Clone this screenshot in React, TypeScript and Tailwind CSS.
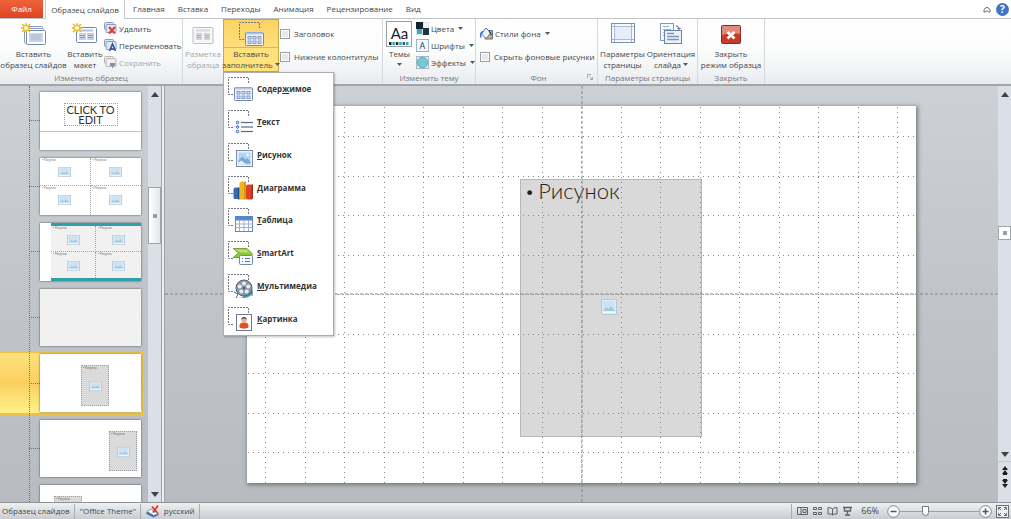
import type { ReactNode } from 'react';

type IconProps = { className?: string };

const SANS = "font-['Open_Sans','Noto_Sans',sans-serif]";
const GEOMETRIC = "font-['Lato','Open_Sans',sans-serif]";

const TABS = ['Главная', 'Вставка', 'Переходы', 'Анимация', 'Рецензирование', 'Вид'];

/* ---------- Icons ---------- */

function Spark() {
  return (
    <g stroke="#e3b62a" strokeWidth="1.300">
      <circle cx="5" cy="5" r="3.500" fill="#f7dc55" stroke="none" />
      <path d="M5 0v10M0 5h10M1 1l8 8M9 1L1 9" />
      <circle cx="5" cy="5" r="2" fill="#fffbd0" stroke="none" />
    </g>
  );
}

function InsertMasterIcon() {
  return (
    <svg width="26" height="24" viewBox="0 0 26 24" fill="none">
      <rect x="4.500" y="3.500" width="17" height="13" rx="1" fill="#f4f7fb" stroke="#8b9dbb" />
      <rect x="3.500" y="5.500" width="19" height="15" rx="1" fill="#fff" stroke="#8b9dbb" />
      <rect x="5.500" y="7.500" width="19" height="14" rx="1" fill="#fff" stroke="#7287ab" />
      <rect x="8" y="10" width="14" height="9" fill="#c9d4e8" />
      <path d="M10 12h10M10 14h10M10 16h10" stroke="#a9b8d2" />
      <Spark />
    </svg>
  );
}

function InsertLayoutIcon() {
  return (
    <svg width="26" height="24" viewBox="0 0 26 24" fill="none">
      <rect x="4.500" y="4.500" width="20" height="15" rx="1" fill="#fff" stroke="#7287ab" />
      <path d="M8 7.500h13" stroke="#b4c2d9" strokeWidth="2" />
      <rect x="7" y="10" width="7" height="7" fill="#c3cfe4" />
      <rect x="15" y="10" width="7" height="7" fill="#c3cfe4" />
      <path d="M8 12.500h5M8 14.500h5M16 12.500h5M16 14.500h5" stroke="#8fa1c0" />
      <Spark />
    </svg>
  );
}

function LayoutIcon() {
  return (
    <svg width="22" height="24" viewBox="0 0 22 24" fill="none">
      <rect x="1" y="4.500" width="20" height="16" rx="1" fill="#f8f6f8" stroke="#c2bcc4" />
      <path d="M4 7.500h14" stroke="#dcd7de" strokeWidth="2" />
      <rect x="4" y="10" width="6" height="7" fill="#d6d1d9" />
      <rect x="12" y="10" width="6" height="7" fill="#d6d1d9" />
      <path d="M5 12.500h4M5 14.500h4M13 12.500h4M13 14.500h4" stroke="#b8b1bc" />
    </svg>
  );
}

function SmallSlides({ muted }: { muted?: boolean }) {
  const stroke = muted ? '#b9b6bc' : '#8b9dbb';
  const fill = muted ? '#eeedf0' : '#dfe7f3';
  return (
    <>
      <rect x="0.500" y="0.500" width="9" height="7" rx="1" fill={fill} stroke={stroke} />
      <rect x="2" y="2.500" width="10" height="8" rx="1" fill={fill} stroke={stroke} />
    </>
  );
}

function DeleteIcon() {
  return (
    <svg width="13" height="13" viewBox="0 0 13 13" fill="none">
      <SmallSlides />
      <path d="M5 5l6 6.500M11 5l-6 6.500" stroke="#e23a2e" strokeWidth="2" />
    </svg>
  );
}

function RenameIcon() {
  return (
    <svg width="13" height="13" viewBox="0 0 13 13" fill="none">
      <SmallSlides />
      <path d="M5.500 12L8.500 5l3 7M6.500 10h4" stroke="#2c50a0" strokeWidth="1.5" />
    </svg>
  );
}

function PreserveIcon() {
  return (
    <svg width="13" height="13" viewBox="0 0 13 13" fill="none">
      <SmallSlides muted />
      <path d="M6 7h5v3H9v2H8v-2H6z" fill="#8f8d92" />
    </svg>
  );
}

/** Dashed square that every placeholder icon is drawn on */
function Placeholder({ children }: { children: ReactNode }) {
  return (
    <svg width="26" height="26" viewBox="0 0 26 26" fill="none">
      <path
        d="M6 18.500H1.500V1.500h20V7"
        stroke="#74777d"
        strokeDasharray="2 1"
      />
      {children}
    </svg>
  );
}

function ContentArt() {
  return (
    <>
      <rect x="7.500" y="11.500" width="18" height="13" rx="1" fill="#f2f6fc" stroke="#6f88b0" />
      <path d="M8 12.500h17" stroke="#b5c8e4" strokeWidth="2" />
      {[10, 15, 20].map((x) => (
        <g key={x} fill="#e1eaf6" stroke="#6b85b5" strokeWidth="0.8">
          <rect x={x} y="15.500" width="3" height="2.500" />
          <rect x={x} y="20" width="3" height="2.500" />
        </g>
      ))}
    </>
  );
}

function TextArt() {
  return (
    <>
      {[13.5, 18, 22.5].map((y) => (
        <g key={y}>
          <circle cx="10.500" cy={y} r="1.300" fill="#d3e4fa" stroke="#3568b8" />
          <path d={`M14 ${y}h12`} stroke="#55688a" strokeWidth="1.2" />
        </g>
      ))}
    </>
  );
}

function PictureArt() {
  return (
    <>
      <rect x="9.500" y="8.500" width="16" height="16" fill="#eaf1fa" stroke="#7d8da8" />
      <rect x="11.500" y="10.500" width="12" height="12" fill="#b4d5f2" />
      <path d="M11.500 21.500v-3l4-4 3 3 2-1.500 3 4v1.500z" fill="#7ea6d0" />
      <path d="M11.500 22.500v-2l3-2 4 3.500v.5z" fill="#e9f3fc" />
      <circle cx="20.500" cy="13" r="1.200" fill="#fff" />
    </>
  );
}

function ChartArt() {
  return (
    <>
      <path d="M6.500 14l1.500-1.500h4.500V24h-5l-1-1z" fill="#2f6cb8" />
      <path d="M11 13l1.500-.5v12H11z" fill="#1d4a88" />
      <path d="M12.500 8l1.500-1.500h4.500V24.500h-5l-1-1z" fill="#f0b51d" />
      <path d="M17.500 7.500l1.200-1v18h-1.200z" fill="#b98010" />
      <path d="M19 11l1.500-1.500H26V23l-1 1.500h-5l-1-1z" fill="#db4526" />
      <path d="M24.500 10.500l1.500-1V23l-1.500 1.500z" fill="#a52c16" />
    </>
  );
}

function TableArt() {
  return (
    <>
      <rect x="8.500" y="9.500" width="17" height="15" fill="#fff" stroke="#6785b8" />
      <rect x="8.500" y="9.500" width="17" height="4" fill="#5387d8" />
      <path d="M8.500 17h17M8.500 20.500h17M12.500 13v11M17 13v11M21.500 13v11" stroke="#9db2d3" />
    </>
  );
}

function SmartArt() {
  return (
    <>
      <path d="M6 8.500h14l6 6-3 3H6l5.500-4.500z" fill="#8cc63c" stroke="#5f9722" strokeWidth="0.8" />
      <path d="M7.500 9.500h12l3 3h-9z" fill="#b9df73" />
      <rect x="12.500" y="15.500" width="13" height="9" rx="1" fill="#f4f7fb" stroke="#7289ae" />
      <path d="M15 18.500h1M15 21.500h1M18 18.500h5M18 21.500h5" stroke="#5b76a3" />
    </>
  );
}

function MediaArt() {
  return (
    <>
      <path d="M10 24c4 1.500 6-.5 8-2s5-2 7-6l1 3c-2 4-4 5-8 6z" fill="#4d93bf" />
      <circle cx="17" cy="15" r="8" fill="#8d98a6" stroke="#56616f" />
      <g fill="#e8eef4">
        <circle cx="17" cy="10.500" r="2" />
        <circle cx="12.700" cy="13.500" r="2" />
        <circle cx="14.300" cy="18.600" r="2" />
        <circle cx="19.700" cy="18.600" r="2" />
        <circle cx="21.300" cy="13.500" r="2" />
      </g>
      <circle cx="17" cy="15" r="1.200" fill="#4c5663" />
      <path d="M7 19l4 2-2 4M21 22l4-3v4" stroke="#3f6f93" />
    </>
  );
}

function ClipArt() {
  return (
    <>
      <rect x="9.500" y="8.500" width="15" height="16" fill="#fff" stroke="#6c7b96" />
      <path d="M12.500 21.500c-.5-4 1.500-5 4.500-5s5 1 4.500 5c-2 1.500-7 1.500-9 0z" fill="#e05227" />
      <circle cx="17" cy="14" r="2.600" fill="#e7b48c" />
      <path d="M14.200 14c-.4-4 6-4 5.600 0-1-2-4.600-2-5.600 0z" fill="#4f3a30" />
    </>
  );
}

function ThemesIcon() {
  return (
    <span className="flex h-[26px] w-[26px] flex-col items-center justify-center border border-[#9aa0a8] bg-white">
      <span className={`text-[15px] leading-[18px] text-[#222] ${GEOMETRIC}`}>Aa</span>
      <svg width="20" height="3" viewBox="0 0 20 3">
        {['#182a30', '#2fa9b5', '#182a30', '#2fa9b5', '#40555c', '#2fa9b5'].map((fill, i) => (
          <rect key={i} x={i * 3.4} width="2.500" height="3" fill={fill} />
        ))}
      </svg>
    </span>
  );
}

function ColorsIcon() {
  return (
    <svg width="13" height="13" viewBox="0 0 13 13">
      <rect width="13" height="13" fill="#dfe4ea" />
      <rect width="7" height="7" fill="#14222e" />
      <rect x="7" y="6" width="6" height="7" fill="#20333f" />
      <rect x="1" y="7" width="5" height="5" fill="#2fb0b4" />
      <rect x="8" y="1" width="4" height="5" fill="#edf2f5" />
    </svg>
  );
}

function FontsIcon() {
  return (
    <span className="flex h-[13px] w-[13px] items-center justify-center border border-[#9db0ca] bg-[#f3f7fb] text-[9px] leading-[11px] text-[#283e66]">
      A
    </span>
  );
}

function EffectsIcon() {
  return (
    <svg width="13" height="13" viewBox="0 0 13 13">
      <rect x="0.500" y="0.500" width="12" height="12" fill="#e6eef3" stroke="#abb7c4" />
      <circle cx="6.500" cy="6.500" r="5.300" fill="#74cad0" stroke="#55b2ba" />
    </svg>
  );
}

function FillIcon() {
  return (
    <svg width="13" height="13" viewBox="0 0 13 13" fill="none">
      <path d="M6 3.500h6.500v8.500H5z" fill="#cfb063" stroke="#5d7196" />
      <path d="M6 1l5 5-5 5.500L1.500 7z" fill="#eef3fa" stroke="#5d7196" />
      <path d="M3 4.500C0 6 0 8 1 10.500" stroke="#3474c4" strokeWidth="1.5" />
      <path d="M9 4l2.500 4" stroke="#2b3c5e" strokeWidth="1.3" />
    </svg>
  );
}

function PageSetupIcon() {
  return (
    <svg width="26" height="24" viewBox="0 0 26 24" fill="none">
      <rect x="1.500" y="0.500" width="23" height="19" fill="#f7fafd" stroke="#7d90b0" />
      <rect x="5" y="4" width="16" height="12" fill="#e6eef7" />
      <path d="M4.500 1v18M21.500 1v18M2 3.500h22M2 16.500h22" stroke="#a9bbd4" />
    </svg>
  );
}

function OrientationIcon() {
  return (
    <svg width="24" height="24" viewBox="0 0 24 24" fill="none">
      <rect x="1.500" y="0.500" width="13" height="17" fill="#f7fafd" stroke="#8799b6" />
      <path d="M4 3.500h6M4 6.500h8M4 9.500h8M4 12.500h8" stroke="#9fb2cf" />
      <rect x="5.500" y="7.500" width="17" height="13" fill="#eaf1f9" stroke="#6c83a8" />
      <path d="M8 10.500h7M8 13.500h12M8 16.500h12" stroke="#7f97bb" strokeWidth="1.5" />
      <path d="M17 3c2 0 3 1 3 3m-1.500-1l1.500 1.500L21.500 5" stroke="#3c4d6b" />
    </svg>
  );
}

function CloseMasterIcon() {
  return (
    <svg width="20" height="24" viewBox="0 0 20 24" fill="none">
      <rect x="0.500" y="2.500" width="19" height="18" rx="1" fill="#c93a2a" stroke="#8d2b20" />
      <path d="M1 3h18v8c-6-1-12-1-18 1z" fill="#e08a7e" />
      <path d="M6.500 9l7 6.500M13.500 9l-7 6.500" stroke="#fff" strokeWidth="2.600" />
    </svg>
  );
}

function PictureGlyph({ className }: IconProps) {
  return (
    <svg className={className} viewBox="0 0 16 16" preserveAspectRatio="none" fill="none">
      <rect x="0.500" y="0.500" width="15" height="15" fill="#e1edf6" stroke="#b3c9d9" />
      <rect x="2" y="2" width="12" height="10" fill="#cde3f1" />
      <path d="M2 12l3.500-4 2 2L10 7l4 5z" fill="#a3c8e2" />
      <path d="M2 12.500h12V14H2z" fill="#f5f9fc" />
    </svg>
  );
}

function Triangle({ down, className = '' }: { down?: boolean; className?: string }) {
  return (
    <svg width="8" height="5" viewBox="0 0 8 5" className={className}>
      <path d={down ? 'M0 0h8L4 5z' : 'M0 5h8L4 0z'} fill="#3f4145" />
    </svg>
  );
}

function Caret() {
  return (
    <svg width="5" height="3" viewBox="0 0 5 3" className="inline-block shrink-0">
      <path d="M0 0h5L2.500 3z" fill="#55575b" />
    </svg>
  );
}

/* ---------- Ribbon ---------- */

function Group({ label, children, className }: { label?: string; children: ReactNode; className: string }) {
  return (
    <section className={`flex shrink-0 flex-col border-r border-[#d5d9dd] ${className}`}>
      <div className="flex h-[53px] items-start">{children}</div>
      <div className="h-3 text-center leading-3 text-[#73777d]">{label}</div>
    </section>
  );
}

type BigButtonProps = {
  icon: ReactNode;
  lines: [string, string];
  caret?: boolean;
  disabled?: boolean;
  className: string;
};

function BigButton({ icon, lines, caret, disabled, className }: BigButtonProps) {
  return (
    <button
      type="button"
      disabled={disabled}
      className={`flex shrink-0 flex-col items-center pt-1 leading-[11px] disabled:text-[#a6a8ab] ${className}`}
    >
      <span className="mb-px flex h-6 items-center">{icon}</span>
      <span>{lines[0]}</span>
      <span className="flex items-center gap-0.5">
        {lines[1]}
        {caret && <Caret />}
      </span>
    </button>
  );
}

type SmallButtonProps = { icon: ReactNode; label: string; caret?: boolean; disabled?: boolean };

function SmallButton({ icon, label, caret, disabled }: SmallButtonProps) {
  return (
    <button type="button" disabled={disabled} className="flex h-[17px] items-center gap-0.5 disabled:text-[#a6a8ab]">
      {icon}
      {label}
      {caret && <span className="flex pl-0.5"><Caret /></span>}
    </button>
  );
}

function Check({ label }: { label: string }) {
  return (
    <label className="flex h-[23px] items-center gap-1">
      <input
        type="checkbox"
        className="h-[10px] w-[10px] shrink-0 appearance-none border border-[#9b9fa4] bg-[#e6e8ea] shadow-[inset_0_0_0_1px_#fff]"
      />
      {label}
    </label>
  );
}

const MENU = [
  { pre: 'Содер', hot: 'ж', post: 'имое', art: ContentArt },
  { pre: '', hot: 'Т', post: 'екст', art: TextArt },
  { pre: '', hot: 'Р', post: 'исунок', art: PictureArt },
  { pre: '', hot: 'Д', post: 'иаграмма', art: ChartArt },
  { pre: '', hot: 'Т', post: 'аблица', art: TableArt },
  { pre: '', hot: 'S', post: 'martArt', art: SmartArt },
  { pre: '', hot: 'М', post: 'ультимедиа', art: MediaArt },
  { pre: '', hot: 'К', post: 'артинка', art: ClipArt },
];

function PlaceholderMenu() {
  return (
    <div
      role="menu"
      className="absolute top-full left-0 z-20 grid h-[264px] w-[111px] grid-rows-8 border border-[#a9adb2] bg-white shadow-[1px_1px_2px_rgba(0,0,0,0.25)]"
    >
      {MENU.map(({ pre, hot, post, art: Art }) => (
        <button
          key={pre + hot + post}
          type="button"
          role="menuitem"
          className="flex items-center gap-1 pl-[3px] font-bold text-[#333]"
        >
          <Placeholder>
            <Art />
          </Placeholder>
          <span>
            {pre}
            <u>{hot}</u>
            {post}
          </span>
        </button>
      ))}
    </div>
  );
}

function Ribbon() {
  return (
    <div className="flex h-[67px] shrink-0 border-b-2 border-[#a2a6aa] bg-linear-to-b from-white via-[#fbfcfc] to-[#e9ecef]">
      <Group label="Изменить образец" className="w-[183px]">
        <BigButton icon={<InsertMasterIcon />} lines={['Вставить', 'образец слайдов']} className="w-[67px]" />
        <BigButton icon={<InsertLayoutIcon />} lines={['Вставить', 'макет']} className="w-[36px]" />
        <div className="flex flex-col pt-px pl-px">
          <SmallButton icon={<DeleteIcon />} label="Удалить" />
          <SmallButton icon={<RenameIcon />} label="Переименовать" />
          <SmallButton icon={<PreserveIcon />} label="Сохранить" disabled />
        </div>
      </Group>

      <Group className="w-[200px]">
        <BigButton icon={<LayoutIcon />} lines={['Разметка', 'образца']} disabled className="w-[40px]" />
        <div className="relative shrink-0">
          <button
            type="button"
            aria-haspopup="menu"
            aria-expanded="true"
            className="flex h-[53px] w-[56px] flex-col items-center border border-[#c9a54a] bg-[#ffe27c] leading-[11px]"
          >
            <span className="flex h-[28px] w-full items-center justify-center border-b border-[#dcb553] bg-linear-to-b from-[#fbd263] to-[#ffdf7d]">
              <Placeholder>
                <ContentArt />
              </Placeholder>
            </span>
            <span>Вставить</span>
            <span className="flex items-center gap-0.5">
              заполнитель
              <Caret />
            </span>
          </button>
          <PlaceholderMenu />
        </div>
        <div className="flex flex-col pt-[3px] pl-px">
          <Check label="Заголовок" />
          <Check label="Нижние колонтитулы" />
        </div>
      </Group>

      <Group label="Изменить тему" className="w-[93px]">
        <button type="button" className="flex w-[33px] flex-col items-center pt-0.5 leading-[11px]">
          <ThemesIcon />
          <span className="mt-px">Темы</span>
          <span className="flex h-[11px] items-center">
            <Caret />
          </span>
        </button>
        <div className="flex flex-col pt-px">
          <SmallButton icon={<ColorsIcon />} label="Цвета" caret />
          <SmallButton icon={<FontsIcon />} label="Шрифты" caret />
          <SmallButton icon={<EffectsIcon />} label="Эффекты" caret />
        </div>
      </Group>

      <Group label="Фон" className="relative w-[122px] pl-1">
        <div className="flex flex-col gap-[3px] pt-1.5">
          <SmallButton icon={<FillIcon />} label="Стили фона" caret />
          <Check label="Скрыть фоновые рисунки" />
        </div>
        <button type="button" aria-label="Формат фона" className="absolute right-1 bottom-1">
          <svg width="6" height="6" viewBox="0 0 6 6" fill="none" stroke="#a5a9ae">
            <path d="M0.500 4V0.500H4M2.500 2.500l3 3M5.500 3v2.500H3" />
          </svg>
        </button>
      </Group>

      <Group label="Параметры страницы" className="w-[100px]">
        <BigButton icon={<PageSetupIcon />} lines={['Параметры', 'страницы']} className="w-[49px]" />
        <BigButton icon={<OrientationIcon />} lines={['Ориентация', 'слайда']} caret className="w-[48px]" />
      </Group>

      <Group label="Закрыть" className="w-[67px]">
        <BigButton icon={<CloseMasterIcon />} lines={['Закрыть', 'режим образца']} className="w-[66px]" />
      </Group>
    </div>
  );
}

function TabBar() {
  return (
    <nav className="flex h-[19px] shrink-0 items-stretch border-b border-[#bfc3c8] bg-white">
      <button type="button" className="w-[43px] bg-linear-to-b from-[#f0613a] to-[#dc4420] text-white">
        Файл
      </button>
      <button
        type="button"
        className="-mb-px ml-0.5 w-[80px] border-x border-[#c9cdd1] bg-white"
      >
        Образец слайдов
      </button>
      <div className="flex items-center gap-[13px] pl-2">
        {TABS.map((tab) => (
          <button key={tab} type="button">
            {tab}
          </button>
        ))}
      </div>
      <div className="ml-auto flex items-center gap-[5px] pr-0.5">
        <button type="button" aria-label="Свернуть ленту">
          <svg width="8" height="7" viewBox="0 0 8 7" fill="none" stroke="#63666a">
            <path d="M1 3.500L4 1l3 2.500V6H5.500L4 4.500 2.500 6H1z" />
          </svg>
        </button>
        <button
          type="button"
          aria-label="Справка"
          className="h-[13px] w-[13px] rounded-full bg-[#3f74c7] text-[10px] leading-[13px] font-bold text-white"
        >
          ?
        </button>
      </div>
    </nav>
  );
}

/* ---------- Slide thumbnails ---------- */

function PictureCell({ className = '' }: { className?: string }) {
  return (
    <div className={`flex flex-col items-center border-[#a3a6a9] ${className}`}>
      <span className="self-start pl-0.5 text-[3px] leading-[5px] text-[#555]">• Рисунок</span>
      <PictureGlyph className="mt-1 h-[10px] w-[13px]" />
    </div>
  );
}

function PictureGrid() {
  return (
    <div className="grid flex-1 grid-cols-2 grid-rows-2">
      <PictureCell className="border-r border-b border-dotted" />
      <PictureCell className="border-b border-dotted" />
      <PictureCell className="border-r border-dotted" />
      <PictureCell />
    </div>
  );
}

function GreyPicture({ className }: { className: string }) {
  return (
    <div
      className={`absolute flex w-[28px] flex-col border border-dotted border-[#9b9ea2] bg-[#dadada] ${className}`}
    >
      <span className="self-start pl-px text-[3px] leading-[5px] text-[#555]">• Рисунок</span>
      <span className="flex flex-1 items-center justify-center pb-1">
        <PictureGlyph className="h-[10px] w-[13px]" />
      </span>
    </div>
  );
}

const SLIDES: { name: string; body: ReactNode }[] = [
  {
    name: 'Заголовок',
    body: (
      <div className="flex w-full flex-col bg-white pt-[11px]">
        <div
          className={`mx-auto w-[54px] border border-dotted border-[#9b9ea2] pt-px text-center text-[11px] leading-[10px] whitespace-normal text-[#333] ${GEOMETRIC}`}
        >
          CLICK TO EDIT
        </div>
        <div className="mt-[5px] border-t border-[#c3c5c8]" />
      </div>
    ),
  },
  { name: 'Четыре рисунка', body: <div className="flex w-full bg-white"><PictureGrid /></div> },
  {
    name: 'Четыре рисунка с полосами',
    body: (
      <div className="flex w-full bg-white pl-[11px]">
        <div className="flex flex-1 flex-col border-y-3 border-[#2fa0a8] bg-[#f1f1f1]">
          <PictureGrid />
        </div>
      </div>
    ),
  },
  { name: 'Пустой', body: <div className="w-full bg-[#f1f1f1]" /> },
  {
    name: 'Рисунок по центру',
    body: <div className="relative w-full bg-white"><GreyPicture className="top-[11px] bottom-[6px] left-[41px]" /></div>,
  },
  {
    name: 'Рисунок справа',
    body: <div className="relative w-full bg-white"><GreyPicture className="top-[11px] bottom-[6px] right-1" /></div>,
  },
  {
    name: 'Рисунок слева',
    body: <div className="relative w-full bg-white"><GreyPicture className="top-[11px] bottom-[6px] left-[14px]" /></div>,
  },
];

const SELECTED = 4;

function Thumbnails() {
  return (
    <div className="relative h-full w-[148px] overflow-hidden pt-0.5">
      <div className="grid h-[459px] grid-rows-7">
        {SLIDES.map(({ name, body }, i) => (
          <div key={name} className="flex py-px pr-1">
            <button
              type="button"
              aria-label={name}
              className={
                i === SELECTED
                  ? 'flex flex-1 border-y-2 border-r-2 border-[#efc23f] bg-linear-to-b from-[#fbe27d] via-[#fbd05f] to-[#fff08a] py-px pr-px'
                  : 'flex flex-1 py-[3px] pr-[3px]'
              }
            >
              <span className="flex w-10 shrink-0 self-center pl-[29px]">
                <span className="flex-1 border-t border-dotted border-[#6c6f73]" />
              </span>
              <div className="flex flex-1 self-stretch shadow-[0_0_2px_rgba(60,64,68,0.9)]">{body}</div>
            </button>
          </div>
        ))}
      </div>
      {/* Линия, связывающая макеты с образцом */}
      <div className="pointer-events-none absolute inset-y-0 left-[29px] border-l border-dotted border-[#6c6f73]" />
    </div>
  );
}

function LeftScroll() {
  return (
    <div className="flex w-[13px] flex-col items-center bg-[#dbdfe8] pt-[6px] pb-[5px]">
      <Triangle />
      <div className="mt-[90px] flex h-[57px] w-[13px] items-center justify-center border border-[#a0a4ab] bg-linear-to-r from-white to-[#e4e7ed]">
        <span className="h-1 w-1 bg-[#9a9da3]" />
      </div>
      <Triangle down className="mt-auto" />
    </div>
  );
}

/* ---------- Slide editor ---------- */

function range(from: number, to: number) {
  return Array.from({ length: to - from + 1 }, (_, i) => from + i);
}

const STEP = 39.5;

function GridLines() {
  return (
    <svg className="absolute inset-0 h-full w-full" shapeRendering="crispEdges">
      <svg x="50%" y="50%" overflow="visible" stroke="#85888b" strokeWidth="1" strokeDasharray="1 4">
        {range(-8, 8).map((n) => (
          <path key={`v${n}`} d={`M${n * STEP} -188V190`} />
        ))}
        {range(-4, 4).map((n) => (
          <path key={`h${n}`} d={`M-334 ${n * STEP}H334`} />
        ))}
      </svg>
    </svg>
  );
}

function Editor() {
  return (
    <main className="relative flex flex-1 bg-linear-to-b from-[#cdd1d5] via-[#c1c5c9] to-[#b8bcc0] px-[82px] pt-5 pb-[19px]">
      <div className="relative flex-1 bg-white shadow-[1px_1px_4px_1px_rgba(70,74,78,0.6)]">
        <div className="absolute top-[19.3%] left-[40.8%] flex h-[68.6%] w-[27.2%] flex-col border border-[#b5b7b9] bg-[#d9d9d9] pl-1">
          <p className={`flex items-center gap-1 text-[22px] leading-[22px] font-light text-[#222] ${GEOMETRIC}`}>
            <span className="text-[16px]">•</span>
            Рисунок
          </p>
          <div className="flex flex-1 items-center justify-center pr-2 pb-6">
            <PictureGlyph className="h-4 w-4" />
          </div>
        </div>
        <GridLines />
      </div>
      {/* Направляющие */}
      <div className="pointer-events-none absolute inset-x-0 top-1/2 -translate-y-1/2 border-t border-dashed border-[#85888b]" />
      <div className="pointer-events-none absolute inset-y-0 left-1/2 -translate-x-1/2 border-l border-dashed border-[#85888b]" />
    </main>
  );
}

function RightScroll() {
  return (
    <div className="flex w-[13px] flex-col items-center bg-[#dbdfe8] pt-[6px] pb-3">
      <Triangle />
      <div className="mt-[129px] flex h-[14px] w-[13px] items-center justify-center border border-[#a0a4ab] bg-white">
        <span className="h-1 w-1 bg-[#9a9da3]" />
      </div>
      <Triangle down className="mt-auto" />
      <span className="mt-1 w-full border-t border-[#c2c6ce]" />
      <svg width="8" height="24" viewBox="0 0 8 24" fill="#1c1d1f" className="mt-1">
        <path d="M4 0l3 4H1zM4 4l3 4H1zM2 8h4v1H2zM2 13h4v1H2zM1 14h6L4 18zM1 18h6L4 22z" />
      </svg>
    </div>
  );
}

/* ---------- Status bar ---------- */

function Divider() {
  return <span className="h-[15px] border-l border-[#a9adb1] pl-px" />;
}

function ViewButton({ label, children }: { label: string; children: ReactNode }) {
  return (
    <button type="button" aria-label={label}>
      <svg width="11" height="10" viewBox="0 0 11 10" fill="none" stroke="#5d6064">
        {children}
      </svg>
    </button>
  );
}

function RoundButton({ label, d }: { label: string; d: string }) {
  return (
    <button type="button" aria-label={label}>
      <svg width="13" height="13" viewBox="0 0 13 13" fill="none">
        <circle cx="6.500" cy="6.500" r="5.800" fill="#f8f9fa" stroke="#85898e" />
        <path d={d} stroke="#55585c" strokeWidth="1.500" />
      </svg>
    </button>
  );
}

function StatusBar() {
  return (
    <footer className="flex h-[17px] shrink-0 items-center border-t border-[#8f9397] bg-linear-to-b from-[#eef0f2] to-[#c9cdd1] pr-0.5 pl-0.5">
      <div className="flex items-center gap-1">
        <span>Образец слайдов</span>
        <Divider />
        <span>"Office Theme"</span>
        <Divider />
        <svg width="14" height="13" viewBox="0 0 14 13" fill="none">
          <path d="M0.500 7l5-2 7 3v2l-5 2.500-7-3.500z" fill="#3f6cb4" />
          <path d="M1 6.500L5 4l3 2.500L12.500 8 8 10.500z" fill="#f4f7fb" stroke="#7b8cab" strokeWidth="0.800" />
          <path d="M6 1.500l5 6M12 0.500l-5 7" stroke="#e0382b" strokeWidth="1.800" />
        </svg>
        <span>русский</span>
        <Divider />
      </div>
      <div className="ml-auto flex items-center">
        <Divider />
        <div className="flex items-center gap-1 px-1">
          <ViewButton label="Обычный">
            <path d="M0.500 1.500h10v7h-10zM4 1.500v7M6 3.500h3v3H6z" />
          </ViewButton>
          <ViewButton label="Сортировщик слайдов">
            <path d="M1.500 1.500h3v2h-3zM6.500 1.500h3v2h-3zM1.500 6.500h3v2h-3zM6.500 6.500h3v2h-3z" />
          </ViewButton>
          <ViewButton label="Режим чтения">
            <path d="M1 1.500l3 .5 1.500 1L7 2l3-.5V8H7L5.500 9 4 8H1zM5.500 3v6" />
          </ViewButton>
          <ViewButton label="Показ слайдов">
            <path d="M1 1.500h9M2.500 2v3h6V2M5.500 5v4M3 9h5" strokeWidth="1.300" />
          </ViewButton>
        </div>
        <button type="button" className="pl-1 text-[9px]">
          66%
        </button>
        <span className="flex pl-2">
          <RoundButton label="Уменьшить" d="M3.500 6.500h6" />
        </span>
        <input
          type="range"
          aria-label="Масштаб"
          defaultValue={31}
          className="h-[11px] w-[79px] appearance-none bg-[linear-gradient(#9b9fa4,#9b9fa4)] bg-[length:100%_1px] bg-center bg-no-repeat [&::-webkit-slider-thumb]:h-[10px] [&::-webkit-slider-thumb]:w-[7px] [&::-webkit-slider-thumb]:appearance-none [&::-webkit-slider-thumb]:rounded-b-sm [&::-webkit-slider-thumb]:border [&::-webkit-slider-thumb]:border-[#74787d] [&::-webkit-slider-thumb]:bg-white"
        />
        <RoundButton label="Увеличить" d="M3.500 6.500h6M6.500 3.500v6" />
        <button type="button" aria-label="Вписать в окно" className="pl-1">
          <svg width="13" height="13" viewBox="0 0 13 13" fill="none" stroke="#6a6d71">
            <rect x="0.500" y="0.500" width="12" height="12" fill="#eceeef" />
            <path d="M2.500 5V2.500H5M8 2.500h2.500V5M10.500 8v2.500H8M5 10.500H2.500V8M3 3l2 2M10 3L8 5M10 10L8 8M3 10l2-2" />
          </svg>
        </button>
      </div>
    </footer>
  );
}

export default function App() {
  return (
    <div className={`flex h-screen flex-col overflow-hidden text-[8px] whitespace-nowrap text-[#44474b] ${SANS}`}>
      <TabBar />
      <Ribbon />
      <div className="flex min-h-0 flex-1">
        <aside className="flex shrink-0 bg-linear-to-b from-[#cdd1d5] via-[#c1c5c9] to-[#b8bcc0]">
          <Thumbnails />
          <LeftScroll />
          <div className="w-1 border-x border-[#9fa3a8] bg-[#eceef1]" />
        </aside>
        <Editor />
        <RightScroll />
      </div>
      <StatusBar />
    </div>
  );
}
